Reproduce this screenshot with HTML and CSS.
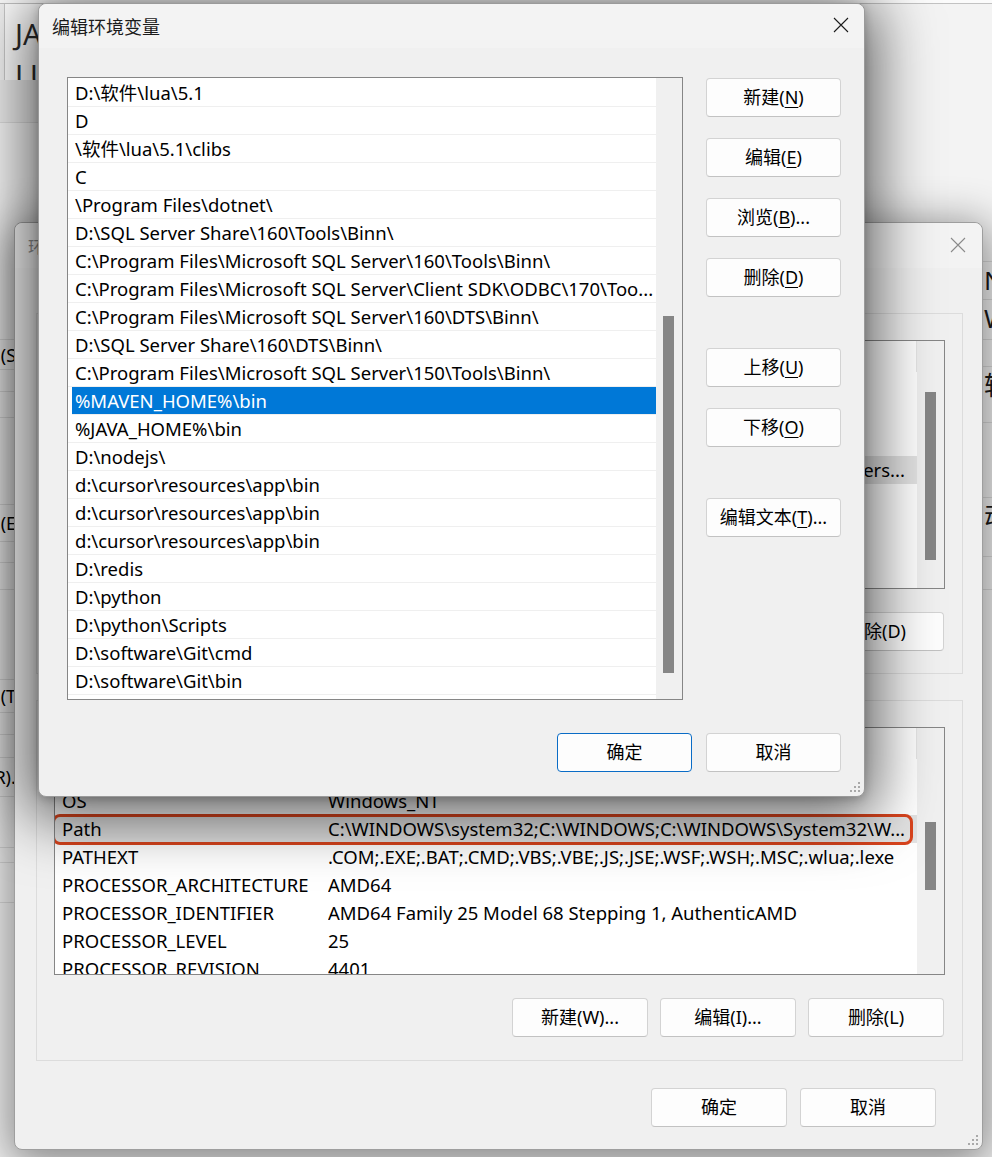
FILE: index.html
```html
<!DOCTYPE html>
<html lang="zh-CN">
<head>
    <meta charset="UTF-8">
    <meta name="viewport" content="width=device-width, initial-scale=1.0">
    <title>编辑环境变量</title>
    <link rel="stylesheet" href="styles.css">
</head>
<body>
<div class="desktop">

    <!-- window far behind: only its edges show -->
    <div class="win back">
        <div class="back-left">
            <div class="editor">
                <div class="big">JA</div>
                <div class="big">LU</div>
            </div>
            <div class="cell shade"></div>
            <div class="cell"></div>
            <div class="cell">(S)</div>
            <div class="cell"></div>
            <div class="cell"></div>
            <div class="cell"></div>
            <div class="cell">(E)</div>
            <div class="cell"></div>
            <div class="cell"></div>
            <div class="cell"></div>
            <div class="cell">(T)</div>
            <div class="cell"></div>
            <div class="cell"></div>
            <div class="cell dots">(R)...</div>
            <div class="cell"></div>
            <div class="cell"></div>
            <div class="cell"></div>
            <div class="cell last"></div>
        </div>
        <div class="back-right">
            <div class="frag"></div>
            <div class="frag big">N</div>
            <div class="frag big">W</div>
            <div class="frag"></div>
            <div class="frag big">辑</div>
            <div class="frag"></div>
            <div class="frag big">动</div>
            <div class="frag"></div>
            <div class="frag last"></div>
        </div>
    </div>

    <!-- 环境变量 dialog (inactive) -->
    <div class="win envwin">
        <div class="titlebar">
            <span class="title dim">环境变量</span>
            <span class="close">
                <svg width="16" height="16" viewBox="0 0 16 16"><path d="M1 1L15 15M15 1L1 15" stroke="#8a8a8a" stroke-width="1.1" fill="none"/></svg>
            </span>
        </div>
        <div class="env-body">
            <div class="group">
                <div class="vlist">
                    <div class="vrows">
                        <div class="vhead"><span class="vname">变量</span><span class="vval">值</span></div>
                        <div class="vrow"><span class="vname">IntelliJ IDEA</span><span class="vval">D:\IntelliJ IDEA\bin;</span></div>
                        <div class="vrow"><span class="vname">OneDrive</span><span class="vval">C:\Users\Administrator\OneDrive</span></div>
                        <div class="vrow"><span class="vname">OneDriveConsumer</span><span class="vval">C:\Users\Administrator\OneDrive</span></div>
                        <div class="vrow inactive-sel"><span class="vname">Path</span><span class="vval tail"><span>C:\Users\Administrator\AppData\Local\Microsoft\WindowsApps;D:\Microsoft VS Code\bin;C:\Users...</span></span></div>
                        <div class="vrow"><span class="vname">TEMP</span><span class="vval">C:\Users\Administrator\AppData\Local\Temp</span></div>
                        <div class="vrow"><span class="vname">TMP</span><span class="vval">C:\Users\Administrator\AppData\Local\Temp</span></div>
                    </div>
                    <div class="track"><div class="thumb thumb-user"></div></div>
                </div>
                <div class="group-btns">
                    <div class="btn wide">新建(N)...</div>
                    <div class="btn wide">编辑(E)...</div>
                    <div class="btn wide">删除(D)</div>
                </div>
            </div>

            <div class="group second">
                <div class="vlist">
                    <div class="vrows">
                        <div class="vhead"><span class="vname">变量</span><span class="vval">值</span></div>
                        <div class="vrow"><span class="vname">NUMBER_OF_PROCESSORS</span><span class="vval">16</span></div>
                        <div class="vrow"><span class="vname">OS</span><span class="vval">Windows_NT</span></div>
                        <div class="vrow inactive-sel marked"><span class="vname">Path</span><span class="vval">C:\WINDOWS\system32;C:\WINDOWS;C:\WINDOWS\System32\W...</span></div>
                        <div class="vrow"><span class="vname">PATHEXT</span><span class="vval">.COM;.EXE;.BAT;.CMD;.VBS;.VBE;.JS;.JSE;.WSF;.WSH;.MSC;.wlua;.lexe</span></div>
                        <div class="vrow"><span class="vname">PROCESSOR_ARCHITECTURE</span><span class="vval">AMD64</span></div>
                        <div class="vrow"><span class="vname">PROCESSOR_IDENTIFIER</span><span class="vval">AMD64 Family 25 Model 68 Stepping 1, AuthenticAMD</span></div>
                        <div class="vrow"><span class="vname">PROCESSOR_LEVEL</span><span class="vval">25</span></div>
                        <div class="vrow"><span class="vname">PROCESSOR_REVISION</span><span class="vval">4401</span></div>
                        <div class="vrow"><span class="vname">PSModulePath</span><span class="vval">%ProgramFiles%\WindowsPowerShell\Modules</span></div>
                    </div>
                    <div class="track"><div class="thumb thumb-sys"></div></div>
                </div>
                <div class="group-btns">
                    <div class="btn wide">新建(W)...</div>
                    <div class="btn wide">编辑(I)...</div>
                    <div class="btn wide">删除(L)</div>
                </div>
            </div>

            <div class="env-foot">
                <div class="btn wide">确定</div>
                <div class="btn wide">取消</div>
            </div>
        </div>
        <svg class="grip" width="12" height="12" viewBox="0 0 12 12"><g fill="#a9a9a9"><rect x="9" y="1" width="2" height="2"/><rect x="5" y="5" width="2" height="2"/><rect x="9" y="5" width="2" height="2"/><rect x="1" y="9" width="2" height="2"/><rect x="5" y="9" width="2" height="2"/><rect x="9" y="9" width="2" height="2"/></g></svg>
    </div>

    <!-- 编辑环境变量 dialog (active, on top) -->
    <div class="win editwin">
        <div class="titlebar">
            <span class="title">编辑环境变量</span>
            <span class="close">
                <svg width="16" height="16" viewBox="0 0 16 16"><path d="M1 1L15 15M15 1L1 15" stroke="#1a1a1a" stroke-width="1.1" fill="none"/></svg>
            </span>
        </div>
        <div class="edit-body">
            <div class="plist">
                <div class="prows">
                    <div class="prow">D:\软件\lua\5.1</div>
                    <div class="prow">D</div>
                    <div class="prow">\软件\lua\5.1\clibs</div>
                    <div class="prow">C</div>
                    <div class="prow">\Program Files\dotnet\</div>
                    <div class="prow">D:\SQL Server Share\160\Tools\Binn\</div>
                    <div class="prow">C:\Program Files\Microsoft SQL Server\160\Tools\Binn\</div>
                    <div class="prow">C:\Program Files\Microsoft SQL Server\Client SDK\ODBC\170\Too...</div>
                    <div class="prow">C:\Program Files\Microsoft SQL Server\160\DTS\Binn\</div>
                    <div class="prow">D:\SQL Server Share\160\DTS\Binn\</div>
                    <div class="prow">C:\Program Files\Microsoft SQL Server\150\Tools\Binn\</div>
                    <div class="prow selected">%MAVEN_HOME%\bin</div>
                    <div class="prow">%JAVA_HOME%\bin</div>
                    <div class="prow">D:\nodejs\</div>
                    <div class="prow">d:\cursor\resources\app\bin</div>
                    <div class="prow">d:\cursor\resources\app\bin</div>
                    <div class="prow">d:\cursor\resources\app\bin</div>
                    <div class="prow">D:\redis</div>
                    <div class="prow">D:\python</div>
                    <div class="prow">D:\python\Scripts</div>
                    <div class="prow">D:\software\Git\cmd</div>
                    <div class="prow">D:\software\Git\bin</div>
                    <div class="prow">D:\MinGW\bin</div>
                </div>
                <div class="track"><div class="thumb thumb-edit"></div></div>
            </div>
            <div class="side-btns">
                <div class="btn">新建(<u>N</u>)</div>
                <div class="btn">编辑(<u>E</u>)</div>
                <div class="btn">浏览(<u>B</u>)...</div>
                <div class="btn">删除(<u>D</u>)</div>
                <div class="btn apart">上移(<u>U</u>)</div>
                <div class="btn">下移(<u>O</u>)</div>
                <div class="btn apart">编辑文本(<u>T</u>)...</div>
            </div>
        </div>
        <div class="edit-foot">
            <div class="btn primary">确定</div>
            <div class="btn">取消</div>
        </div>
        <svg class="grip" width="12" height="12" viewBox="0 0 12 12"><g fill="#a9a9a9"><rect x="9" y="1" width="2" height="2"/><rect x="5" y="5" width="2" height="2"/><rect x="9" y="5" width="2" height="2"/><rect x="1" y="9" width="2" height="2"/><rect x="5" y="9" width="2" height="2"/><rect x="9" y="9" width="2" height="2"/></g></svg>
    </div>

</div>
</body>
</html>
```

FILE: styles.css
```css
/* Windows 11 style dialogs, stacked */
* {
    box-sizing: border-box;
}
body {
    margin: 0;
    width: 992px;
    height: 1157px;
    overflow: hidden;
    background: #fbfbfb;
    font-family: "Noto Sans", "Noto Sans CJK SC", sans-serif;
    font-size: 18.5px;
    color: #000;
}
.desktop {
    position: relative;
    width: 992px;
    height: 1157px;
    overflow: hidden;
}
.win {
    position: absolute;
    background: #f0f0f0;
    border: 1px solid #9e9e9e;
    border-radius: 8px;
}

/* back window */
.back {
    left: -12px;
    top: 3px;
    width: 1020px;
    height: 1170px;
    border-color: #c2c2c2;
    background: #f3f3f3;
    display: flex;
    justify-content: space-between;
}
.back-left {
    width: 50px;
    display: grid;
    grid-template-rows: 76px 43px 217px 30px 22px 26px 87px 37px 21px 27px 90px 33px 22px 23px 39px 51px 15px 40px 1fr;
}
.editor {
    background: #fff;
    margin-left: 15px;
    border-left: 1px solid #c9c9c9;
    padding: 9px 0 0 10px;
    overflow: hidden;
}
.big {
    font-size: 29px;
    line-height: 41px;
    color: #2b2b2b;
}
.cell {
    border-bottom: 1px solid #dadada;
    padding-right: 23px;
    display: flex;
    align-items: center;
    justify-content: flex-end;
    white-space: nowrap;
    font-size: 18px;
}
.cell.dots {
    padding-right: 19px;
}
.cell.shade {
    background: #ebebeb;
}
.cell.last, .frag.last {
    border-bottom: none;
}
.back-right {
    width: 25px;
    display: grid;
    grid-template-rows: 258px 38px 40px 27px 56px 75px 59px 33px 1fr;
}
.frag {
    padding-left: 2px;
    border-bottom: 1px solid #dadada;
    overflow: hidden;
    white-space: nowrap;
}
.frag.big {
    font-size: 26px;
    line-height: 36px;
    color: #1a1a1a;
}

/* shared dialog parts */
.titlebar {
    display: flex;
    align-items: center;
    justify-content: space-between;
    background: #f3f3f3;
    border-radius: 8px 8px 0 0;
    padding-left: 13px;
}
.title {
    font-size: 18px;
    color: #1b1b1b;
}
.title.dim {
    font-size: 16px;
    color: #8d8d8d;
}
.close {
    display: flex;
    width: 46px;
    justify-content: center;
    margin-top: -2px;
}
.btn {
    width: 135px;
    height: 39px;
    line-height: 37px;
    font-size: 18px;
    text-align: center;
    background: #fdfdfd;
    border: 1px solid #d3d3d3;
    border-bottom-color: #c2c2c2;
    border-radius: 4px;
    white-space: nowrap;
}
.btn.wide {
    width: 136px;
}
.btn.primary {
    border-color: #0a6cc6;
}
.btn u {
    text-underline-offset: 3px;
    text-decoration-thickness: 1px;
}
.track {
    background: #f0f0f0;
    display: flex;
    flex-direction: column;
}
.thumb {
    width: 11px;
    background: #868686;
}
.grip {
    position: absolute;
    right: 3px;
    bottom: 3px;
}

/* 环境变量 */
.envwin {
    left: 14px;
    top: 222px;
    width: 969px;
    height: 928px;
    box-shadow: 0 8px 44px 6px rgba(0, 0, 0, 0.45);
}
.envwin .titlebar {
    height: 45px;
}
.envwin .close {
    width: 48px;
}
.env-body {
    padding: 45px 19px 0 21px;
}
.group {
    height: 361px;
    border: 1px solid #dcdcdc;
    padding: 26px 17px 0 17px;
}
.group.second {
    margin-top: 26px;
}
.vlist {
    height: 249px;
    border: 1px solid #868686;
    background: #fff;
    display: flex;
    overflow: hidden;
}
.group.second .vlist {
    height: 248px;
}
.vrows {
    flex: 1;
    min-width: 0;
}
.vhead, .vrow {
    display: flex;
    height: 28px;
    line-height: 28px;
    white-space: nowrap;
}
.vhead {
    height: 31px;
    line-height: 31px;
    border-right: 1px solid #e5e5e5;
    color: #333;
}
.vname {
    width: 273px;
    flex: none;
    padding-left: 7px;
    overflow: hidden;
}
.vval {
    flex: 1;
    min-width: 0;
    overflow: hidden;
    padding-right: 12px;
}
.vval.tail {
    display: flex;
    justify-content: flex-end;
}
.vval.tail span {
    flex: none;
}
.inactive-sel {
    background: #e3e3e3;
}
.marked {
    position: relative;
    overflow: visible;
}
.marked::after {
    content: "";
    position: absolute;
    left: -3px;
    right: 4px;
    top: -1px;
    bottom: -2px;
    border: 3px solid #d9441d;
    border-radius: 8px;
}
.vlist .track {
    width: 27px;
}
.vlist .thumb {
    margin-left: 8px;
}
.thumb-user {
    margin-top: 51px;
    height: 168px;
}
.thumb-sys {
    margin-top: 94px;
    height: 68px;
}
.group-btns {
    display: flex;
    justify-content: flex-end;
    gap: 12px;
    margin-top: 23px;
    padding-right: 1px;
}
.env-foot {
    display: flex;
    justify-content: flex-end;
    gap: 13px;
    margin-top: 27px;
    padding-right: 27px;
}

/* 编辑环境变量 */
.editwin {
    left: 38px;
    top: 3px;
    width: 827px;
    height: 794px;
    border-color: #9a9a9a;
    box-shadow: 0 10px 60px 12px rgba(0, 0, 0, 0.6), 0 2px 10px rgba(0, 0, 0, 0.2);
}
.editwin .titlebar {
    height: 44px;
}
.edit-body {
    display: flex;
    gap: 23px;
    padding: 29px 23px 0 28px;
}
.plist {
    width: 616px;
    height: 623px;
    border: 1px solid #868686;
    background: #fff;
    display: flex;
    overflow: hidden;
}
.prows {
    flex: 1;
    min-width: 0;
    padding-top: 1px;
}
.prow {
    height: 28px;
    line-height: 27px;
    padding-left: 7px;
    border-bottom: 1px solid #efefef;
    white-space: nowrap;
    overflow: hidden;
}
.prow.selected {
    background: #0078d7;
    color: #fff;
    margin-left: 4px;
    padding-left: 3px;
}
.plist .track {
    width: 26px;
}
.plist .thumb {
    margin-left: 7px;
}
.thumb-edit {
    margin-top: 238px;
    height: 357px;
}
.side-btns {
    display: flex;
    flex-direction: column;
    gap: 21px;
    padding-top: 1px;
}
.side-btns .apart {
    margin-top: 30px;
}
.edit-foot {
    display: flex;
    justify-content: flex-end;
    gap: 14px;
    margin-top: 33px;
    padding-right: 23px;
}
```
